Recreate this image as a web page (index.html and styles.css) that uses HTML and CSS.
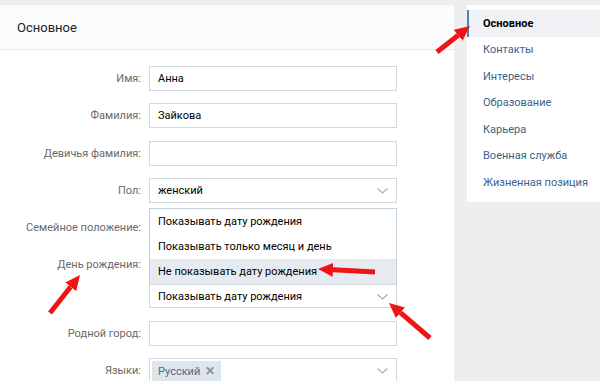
FILE: index.html
```html
<!DOCTYPE html>
<html lang="ru">
<head>
    <meta charset="UTF-8">
    <title>Редактирование страницы</title>
    <link rel="stylesheet" href="styles.css">
</head>
<body>
    <div class="page">
        <!-- Main settings card -->
        <div class="main-card">
            <div class="card-header">Основное</div>
            <div class="form">
                <div class="row">
                    <div class="label">Имя:</div>
                    <div class="field">Анна</div>
                </div>
                <div class="row">
                    <div class="label">Фамилия:</div>
                    <div class="field">Зайкова</div>
                </div>
                <div class="row">
                    <div class="label">Девичья фамилия:</div>
                    <div class="field"></div>
                </div>
                <div class="row">
                    <div class="label">Пол:</div>
                    <div class="field select">женский<svg class="chevron" width="11" height="6" viewBox="0 0 11 6"><polyline points="0.5,0.5 5.5,5 10.5,0.5"/></svg></div>
                </div>
                <div class="row">
                    <div class="label">Семейное положение:</div>
                    <div class="field select"></div>
                </div>
                <div class="row row-top">
                    <div class="label">День рождения:</div>
                    <div class="birthday">
                        <div class="date-selects">
                            <div class="field select"></div>
                            <div class="field select"></div>
                            <div class="field select"></div>
                        </div>
                        <div class="privacy">
                            <!-- opened dropdown goes up over the rows above -->
                            <div class="dropdown">
                                <div class="option">Показывать дату рождения</div>
                                <div class="option">Показывать только месяц и день</div>
                                <div class="option option-hover">Не показывать дату рождения</div>
                            </div>
                            <div class="field select privacy-select">Показывать дату рождения<svg class="chevron" width="11" height="6" viewBox="0 0 11 6"><polyline points="0.5,0.5 5.5,5 10.5,0.5"/></svg></div>
                        </div>
                    </div>
                </div>
                <div class="row">
                    <div class="label">Родной город:</div>
                    <div class="field"></div>
                </div>
                <div class="row">
                    <div class="label">Языки:</div>
                    <div class="field select tags">
                        <span class="tag">Русский <span class="tag-x">✕</span></span>
                        <svg class="chevron" width="11" height="6" viewBox="0 0 11 6"><polyline points="0.5,0.5 5.5,5 10.5,0.5"/></svg>
                    </div>
                </div>
            </div>
        </div>

        <!-- Right menu -->
        <div class="side-menu">
            <div class="menu-item active">Основное</div>
            <div class="menu-item">Контакты</div>
            <div class="menu-item">Интересы</div>
            <div class="menu-item">Образование</div>
            <div class="menu-item">Карьера</div>
            <div class="menu-item">Военная служба</div>
            <div class="menu-item">Жизненная позиция</div>
        </div>
    </div>

    <!-- Red pointer arrows drawn on top of the screenshot -->
    <svg class="arrows" width="600" height="381" viewBox="0 0 600 381">
        <defs>
            <marker id="head" viewBox="0 0 15 14" refX="0" refY="7" markerWidth="15" markerHeight="14" markerUnits="userSpaceOnUse" orient="auto">
                <path d="M0,0 L15,7 L0,14 z" fill="#f01414"/>
            </marker>
        </defs>
        <line x1="437" y1="52" x2="458.2" y2="35.3" marker-end="url(#head)"/>
        <line x1="50" y1="313" x2="70.7" y2="286.8" marker-end="url(#head)"/>
        <line x1="375" y1="272" x2="333" y2="269.8" marker-end="url(#head)"/>
        <line x1="430" y1="338" x2="400.4" y2="312.7" marker-end="url(#head)"/>
    </svg>
</body>
</html>
```

FILE: styles.css
```css
/* Basic reset */
* {
    margin: 0;
    padding: 0;
    box-sizing: border-box;
}

body {
    width: 600px;
    height: 381px;
    overflow: hidden;
    background: #edeef0;
    font-family: Roboto, "Open Sans", Arial, sans-serif;
    font-size: 11px;
    color: #000;
    position: relative;
}

.page {
    display: flex;
    align-items: flex-start;
    padding-top: 5px;
}

/* Main card */
.main-card {
    width: 454px;
    height: 390px;
    background: #fff;
    flex-shrink: 0;
}

.card-header {
    height: 45px;
    display: flex;
    align-items: center;
    padding-left: 17px;
    font-size: 13px;
    color: #222;
    background: #fafbfc;
    border-bottom: 1px solid #e7e8ec;
}

.form {
    padding-top: 16px;
}

.row {
    display: grid;
    grid-template-columns: 141px 248px;
    column-gap: 8px;
    align-items: center;
    margin-bottom: 12.3px;
}

.row-top {
    align-items: start;
}

.row-top .label {
    line-height: 25px;
}

.label {
    text-align: right;
    color: #6a6a6a;
}

.field {
    position: relative;
    height: 25px;
    border: 1px solid #d3d9de;
    padding: 0 8px;
    display: flex;
    align-items: center;
    background: #fff;
}

.chevron {
    position: absolute;
    right: 8px;
    top: 9px;
    fill: none;
    stroke: #a5afba;
    stroke-width: 1.2;
}

.date-selects {
    display: grid;
    grid-template-columns: 50px 1fr 70px;
    gap: 6px;
}

.privacy {
    position: relative;
    margin-top: 7px;
}

.privacy-select {
    height: 24px;
}

.dropdown {
    position: absolute;
    left: 0;
    right: 0;
    bottom: 100%;
    background: #fff;
    border: 1px solid #c5d0db;
    border-bottom: none;
}

.option {
    height: 25px;
    display: flex;
    align-items: center;
    padding-left: 8px;
}

.option-hover {
    background: #e5ebf1;
}

.tags {
    padding-left: 2px;
    align-items: flex-start;
    padding-top: 2px;
}

.tag {
    background: #dde5ed;
    color: #55677d;
    height: 20px;
    padding: 0 6px;
    display: flex;
    align-items: center;
    gap: 5px;
}

.tag-x {
    color: #7f90a4;
    font-size: 12px;
    font-weight: 700;
}

/* Right menu */
.side-menu {
    width: 133px;
    margin-left: 13px;
    background: #fff;
    padding: 5px 0 6px;
}

.menu-item {
    height: 26.5px;
    display: flex;
    align-items: center;
    padding-left: 14px;
    border-left: 2px solid transparent;
    color: #3e5f86;
    font-size: 11px;
    white-space: nowrap;
}

.menu-item.active {
    border-left-color: #5181b8;
    background: #f0f2f5;
    color: #000;
    font-weight: 700;
}

/* Arrows overlay */
.arrows {
    position: absolute;
    left: 0;
    top: 0;
    pointer-events: none;
}

.arrows line {
    stroke: #f01414;
    stroke-width: 5;
}
```
